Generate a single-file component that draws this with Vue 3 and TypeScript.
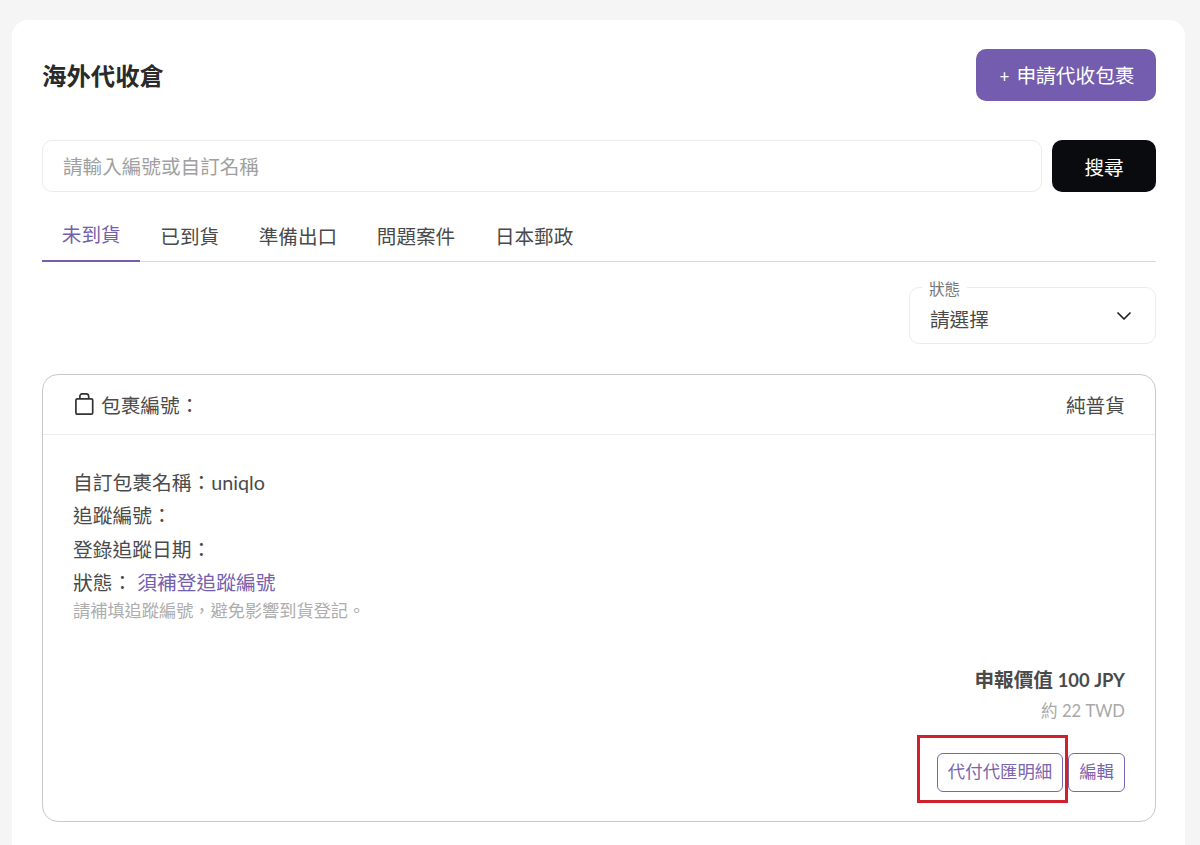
<script setup lang="ts">
const tabs = ['未到貨', '已到貨', '準備出口', '問題案件', '日本郵政']
</script>

<template>
  <div class="page">
    <main class="panel">
      <header class="top">
        <h1>海外代收倉</h1>
        <button class="apply"><span class="plus">+</span> 申請代收包裹</button>
      </header>

      <div class="search">
        <input class="search-input" placeholder="請輸入編號或自訂名稱" />
        <button class="search-btn">搜尋</button>
      </div>

      <nav class="tabs">
        <div v-for="(t, i) in tabs" :key="t" class="tab" :class="{ active: i === 0 }">{{ t }}</div>
      </nav>

      <div class="filter">
        <div class="select">
          <span class="select-label">狀態</span>
          <span class="select-value">請選擇</span>
          <svg class="chevron" width="16" height="10" viewBox="0 0 16 10" fill="none">
            <path d="M2 2l6 6 6-6" stroke="#222" stroke-width="1.7" stroke-linecap="round" stroke-linejoin="round" />
          </svg>
        </div>
      </div>

      <section class="parcel">
        <div class="parcel-head">
          <div class="parcel-id">
            <svg width="21" height="24" viewBox="0 0 21 24" fill="none">
              <rect x="1.9" y="5.8" width="16.8" height="15.4" rx="1.4" stroke="#333" stroke-width="1.7" />
              <path d="M5.9 6V3.2A2.4 2.4 0 0 1 8.3.8h4a2.4 2.4 0 0 1 2.4 2.4V6" stroke="#333" stroke-width="1.7" />
            </svg>
            <span>包裹編號：</span>
          </div>
          <span class="kind">純普貨</span>
        </div>
        <div class="parcel-body">
          <div class="info">
            <p>自訂包裹名稱：uniqlo</p>
            <p>追蹤編號：</p>
            <p>登錄追蹤日期：</p>
            <p>狀態： <span class="status">須補登追蹤編號</span></p>
          </div>
          <p class="hint">請補填追蹤編號，避免影響到貨登記。</p>
          <div class="price">
            <div class="declared">申報價值 <span class="amount">100 JPY</span></div>
            <div class="approx">約 22 TWD</div>
          </div>
          <div class="actions">
            <button class="outline detail">代付代匯明細<span class="marker"></span></button>
            <button class="outline">編輯</button>
          </div>
        </div>
      </section>
    </main>
  </div>
</template>

<style>
html, body { margin: 0; background: #f5f5f5; overflow: hidden; }
</style>

<style scoped>
.page {
  height: 845px;
  box-sizing: border-box;
  padding: 20px 15px 0 12px;
  overflow: hidden;
  font-family: "Lato", "Noto Sans CJK TC", sans-serif;
  color: #333;
}
.panel {
  background: #fff;
  border-radius: 16px 16px 0 0;
  height: 825px;
  box-sizing: border-box;
  padding: 29px 29px 0 30px;
}
.top { display: flex; justify-content: space-between; align-items: center; height: 52px; }
h1 { margin: 0; padding-top: 2px; font-size: 24.4px; line-height: 32px; font-weight: 700; color: #2a2a2a; }
button { font-family: inherit; cursor: pointer; }
.apply {
  width: 180px; height: 52px; border: 0; border-radius: 10px;
  background: #745cae; color: #fff; font-size: 19.7px; line-height: 28px; padding: 3px 0 0 2px;
}
.plus { font-size: 17px; margin-right: 2px; }
.search { display: flex; gap: 10px; margin-top: 39px; }
.search-input {
  flex: 1; min-width: 0; height: 52px; box-sizing: border-box;
  border: 1px solid #ececec; border-radius: 10px; padding: 0 21px 0 20px;
  font-family: inherit; font-size: 19.6px; color: #333; outline: none;
}
.search-input::placeholder { color: #a0a0a0; opacity: 1; }
.search-btn {
  width: 104px; height: 52px; border: 0; border-radius: 10px;
  background: #0a0b0e; color: #fff; font-size: 19.6px; padding: 0;
}
.tabs { display: flex; margin-top: 18px; border-bottom: 1px solid #d9d9d9; height: 51px; }
.tab {
  padding: 2px 19.85px 0; font-size: 19.6px; line-height: 49px; height: 51px; color: #4a4a4a; white-space: nowrap;
  box-sizing: border-box;
}
.tab.active { color: #7560ad; border-bottom: 2px solid #745cae; height: 52px; line-height: 46px; }
.filter { display: flex; justify-content: flex-end; margin-top: 25px; }
.select {
  position: relative; width: 247px; height: 57px; box-sizing: border-box;
  border: 1px solid #ececec; border-radius: 10px;
  display: flex; align-items: center; justify-content: space-between;
  padding: 9px 23px 0 20px;
}
.select-label {
  position: absolute; top: -9px; left: 12px; padding: 0 7px; background: #fff;
  font-size: 15.6px; line-height: 20px; color: #777;
}
.select-value { font-size: 19.6px; line-height: 28px; color: #4a4a4a; }
.chevron { margin-top: -9px; }
.parcel {
  margin-top: 30px; height: 448px; box-sizing: border-box;
  border: 1px solid #c9c9c9; border-radius: 16px;
}
.parcel-head {
  height: 60px; box-sizing: border-box; border-bottom: 1px solid #ececec;
  display: flex; align-items: center; justify-content: space-between; padding: 0 30px 0 31px;
  font-size: 19.7px; color: #4a4a4a;
}
.parcel-id { display: flex; align-items: center; gap: 6px; }
.parcel-body { padding: 31px 30px 0; color: #4a4a4a; position: relative; }
.info p { margin: 0; font-size: 19.75px; line-height: 33.4px; }
.status { color: #7560ad; }
.hint { margin: 0; font-size: 17.2px; line-height: 22px; color: #adadad; }
.price { margin-top: 44px; text-align: right; }
.declared { font-size: 19.6px; line-height: 28px; font-weight: 700; color: #4a4a4a; }
.amount { font-size: 18.4px; }
.approx { margin-top: 5px; font-size: 16.6px; line-height: 24px; color: #a8a8a8; }
.actions { display: flex; justify-content: flex-end; gap: 5px; margin-top: 30px; }
.outline {
  height: 39px; box-sizing: border-box; border: 1px solid #7a65ae; border-radius: 6px; background: #fff;
  color: #7a65ae; font-size: 17.4px; line-height: 24px; padding: 0 10px; white-space: nowrap;
}
.detail { position: relative; }
.marker {
  position: absolute; left: -21px; top: -19px; width: 151px; height: 68px; box-sizing: border-box;
  border: 3px solid #d3202f; pointer-events: none;
}
</style>
